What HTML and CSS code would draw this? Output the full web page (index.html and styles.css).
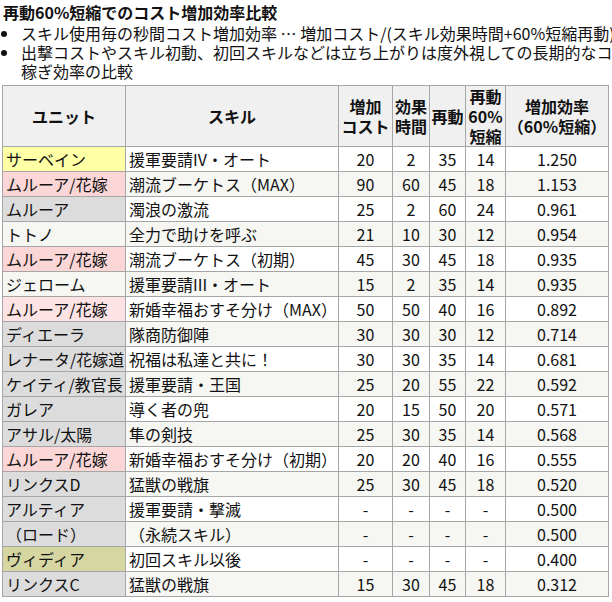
FILE: index.html
```
<!DOCTYPE html>
<html lang="ja">
<head>
<meta charset="utf-8">
<link rel="stylesheet" href="styles.css">
</head>
<body>
<div class="page">
  <h3 class="title">再動60%短縮でのコスト増加効率比較</h3>
  <ul class="notes">
    <li>スキル使用毎の秒間コスト増加効率 … 増加コスト/(スキル効果時間+60%短縮再動)</li>
    <li>出撃コストやスキル初動、初回スキルなどは立ち上がりは度外視しての長期的なコスト<br>稼ぎ効率の比較</li>
  </ul>
  <table class="cmp">
    <colgroup>
      <col class="c-unit"><col class="c-skill"><col class="c-cost"><col class="c-dur"><col class="c-re"><col class="c-re60"><col class="c-eff">
    </colgroup>
    <thead>
      <tr>
        <th>ユニット</th>
        <th>スキル</th>
        <th>増加<br>コスト</th>
        <th>効果<br>時間</th>
        <th>再動</th>
        <th>再動<br>60%<br>短縮</th>
        <th>増加効率<br>（60%短縮）</th>
      </tr>
    </thead>
    <tbody>
      <tr><td class="u yellow">サーベイン</td><td class="s">援軍要請IV・オート</td><td>20</td><td>2</td><td>35</td><td>14</td><td>1.250</td></tr>
      <tr><td class="u pink">ムルーア/花嫁</td><td class="s">潮流ブーケトス（MAX）</td><td>90</td><td>60</td><td>45</td><td>18</td><td>1.153</td></tr>
      <tr><td class="u gray">ムルーア</td><td class="s">濁浪の激流</td><td>25</td><td>2</td><td>60</td><td>24</td><td>0.961</td></tr>
      <tr><td class="u">トトノ</td><td class="s">全力で助けを呼ぶ</td><td>21</td><td>10</td><td>30</td><td>12</td><td>0.954</td></tr>
      <tr><td class="u pink">ムルーア/花嫁</td><td class="s">潮流ブーケトス（初期）</td><td>45</td><td>30</td><td>45</td><td>18</td><td>0.935</td></tr>
      <tr><td class="u">ジェローム</td><td class="s">援軍要請III・オート</td><td>15</td><td>2</td><td>35</td><td>14</td><td>0.935</td></tr>
      <tr><td class="u pink-light">ムルーア/花嫁</td><td class="s">新婚幸福おすそ分け（MAX）</td><td>50</td><td>50</td><td>40</td><td>16</td><td>0.892</td></tr>
      <tr><td class="u gray">ディエーラ</td><td class="s">隊商防御陣</td><td>30</td><td>30</td><td>30</td><td>12</td><td>0.714</td></tr>
      <tr><td class="u gray">レナータ/花嫁道</td><td class="s">祝福は私達と共に！</td><td>30</td><td>30</td><td>35</td><td>14</td><td>0.681</td></tr>
      <tr><td class="u gray">ケイティ/教官長</td><td class="s">援軍要請・王国</td><td>25</td><td>20</td><td>55</td><td>22</td><td>0.592</td></tr>
      <tr><td class="u gray">ガレア</td><td class="s">導く者の兜</td><td>20</td><td>15</td><td>50</td><td>20</td><td>0.571</td></tr>
      <tr><td class="u gray">アサル/太陽</td><td class="s">隼の剣技</td><td>25</td><td>30</td><td>35</td><td>14</td><td>0.568</td></tr>
      <tr><td class="u pink">ムルーア/花嫁</td><td class="s">新婚幸福おすそ分け（初期）</td><td>20</td><td>20</td><td>40</td><td>16</td><td>0.555</td></tr>
      <tr><td class="u gray">リンクスD</td><td class="s">猛獣の戦旗</td><td>25</td><td>30</td><td>45</td><td>18</td><td>0.520</td></tr>
      <tr><td class="u gray">アルティア</td><td class="s">援軍要請・撃滅</td><td>-</td><td>-</td><td>-</td><td>-</td><td>0.500</td></tr>
      <tr><td class="u gray">（ロード）</td><td class="s">（永続スキル）</td><td>-</td><td>-</td><td>-</td><td>-</td><td>0.500</td></tr>
      <tr><td class="u olive">ヴィディア</td><td class="s">初回スキル以後</td><td>-</td><td>-</td><td>-</td><td>-</td><td>0.400</td></tr>
      <tr><td class="u gray">リンクスC</td><td class="s">猛獣の戦旗</td><td>15</td><td>30</td><td>45</td><td>18</td><td>0.312</td></tr>
    </tbody>
  </table>
</div>
</body>
</html>
```
FILE: styles.css
```
html, body {
  margin: 0;
  padding: 0;
  background: #fff;
  overflow: hidden;
}
body {
  font-family: "Noto Sans CJK JP", "Noto Sans", sans-serif;
  color: #111;
  font-size: 16px;
}
.page {
  padding: 2px 0 0 2px;
  width: 700px;
}
.title {
  margin: 0;
  font-size: 16px;
  font-weight: bold;
  line-height: 20px;
  padding-left: 1px;
}
.notes {
  margin: 2px 0 4px 0;
  padding-left: 18px;
  line-height: 19px;
  white-space: nowrap;
}
.notes li {
  padding-left: 1px;
}
.cmp {
  border-collapse: collapse;
  table-layout: fixed;
  width: 607px;
  line-height: 20px;
}
.c-unit { width: 123px; }
.c-skill { width: 213px; }
.c-cost { width: 54px; }
.c-dur { width: 37px; }
.c-re { width: 36px; }
.c-re60 { width: 40px; }
.c-eff { width: 103px; }
.cmp th, .cmp td {
  border: 1px solid #a6a6a6;
  padding: 2px 0;
  text-align: center;
  white-space: nowrap;
  overflow: hidden;
}
.cmp th {
  background: #f0f0f0;
  font-weight: bold;
  height: 56px;
  padding: 0;
  line-height: 20px;
}
.cmp td.u, .cmp td.s {
  text-align: left;
  padding-left: 3px;
}
.cmp tbody tr:nth-child(even) td {
  background: #f6f6f3;
}
.cmp tbody tr td.yellow { background: #ffffa6; }
.cmp tbody tr td.pink { background: #fbd6d6; }
.cmp tbody tr td.pink-light { background: #fde3e3; }
.cmp tbody tr td.gray { background: #dcdcdc; }
.cmp tbody tr td.olive { background: #d6d6a2; }
```
